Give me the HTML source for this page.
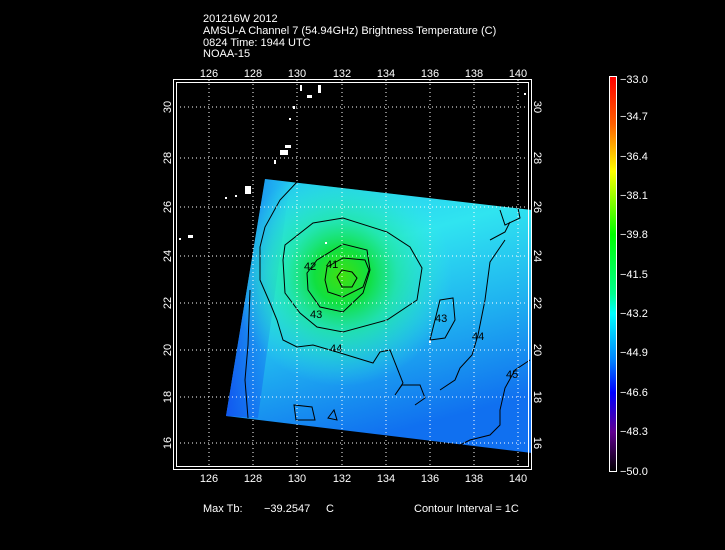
<!DOCTYPE html>
<html><head><style>
html,body{margin:0;padding:0;background:#000;width:725px;height:550px;overflow:hidden}
svg{display:block}
text{font-family:"Liberation Sans",sans-serif;fill:#fff;font-size:11px}
</style></head><body>
<svg width="725" height="550" viewBox="0 0 725 550" xmlns="http://www.w3.org/2000/svg">
<defs>
<linearGradient id="base" x1="0" y1="0" x2="0.3" y2="1">
<stop offset="0" stop-color="#20c0f0"/>
<stop offset="0.35" stop-color="#30e4f0"/>
<stop offset="0.65" stop-color="#20b4f0"/>
<stop offset="1" stop-color="#1070f0"/>
</linearGradient>
<radialGradient id="eye" cx="342" cy="276" r="110" gradientUnits="userSpaceOnUse">
<stop offset="0" stop-color="#40e010"/>
<stop offset="0.25" stop-color="#10e040"/>
<stop offset="0.5" stop-color="#20e8a0" stop-opacity="0.8"/>
<stop offset="1" stop-color="#30f0e0" stop-opacity="0"/>
</radialGradient>
<linearGradient id="cb" x1="0" y1="0" x2="0" y2="1">
<stop offset="0" stop-color="#ff0000"/>
<stop offset="0.12" stop-color="#ff6000"/>
<stop offset="0.24" stop-color="#ffff00"/>
<stop offset="0.4" stop-color="#00ff00"/>
<stop offset="0.55" stop-color="#00ff90"/>
<stop offset="0.6" stop-color="#00ffff"/>
<stop offset="0.72" stop-color="#0080ff"/>
<stop offset="0.8" stop-color="#0000ff"/>
<stop offset="0.9" stop-color="#600090"/>
<stop offset="1" stop-color="#000000"/>
</linearGradient>
<linearGradient id="lft" x1="0" y1="0" x2="1" y2="0">
<stop offset="0" stop-color="#1050f0" stop-opacity="0.9"/>
<stop offset="1" stop-color="#1060f0" stop-opacity="0"/>
</linearGradient>
</defs>
<text x="203" y="22">201216W 2012</text>
<text x="203" y="34">AMSU-A Channel 7 (54.94GHz) Brightness Temperature (C)</text>
<text x="203" y="46">0824 Time: 1944 UTC</text>
<text x="203" y="57">NOAA-15</text>

<polygon points="265,179 532,210 532,453 226,416" fill="url(#base)"/>
<polygon points="265,179 290,182 258,418 226,416" fill="url(#lft)"/>
<polygon points="265,179 532,210 532,453 226,416" fill="url(#eye)"/>

<g fill="none" stroke="#000" stroke-width="1">
<path d="M337,277 L342,270 L352,272 L357,278 L352,287 L342,287 Z"/>
<path d="M327,267 L343,258 L365,260 L369,270 L363,287 L343,297 L328,292 L325,280 Z"/>
<path d="M307,273 L317,260 L343,244 L367,250 L370,270 L363,293 L343,312 L320,307 L308,290 Z"/>
<path d="M283,260 L285,245 L313,223 L343,218 L387,232 L410,247 L422,268 L417,300 L387,320 L343,332 L317,327 L300,313 L285,293 Z"/>
<path d="M297,182 L280,200 L265,227 L260,247 L260,280 L270,303 L277,320 L283,340 L297,347 L313,345 L337,352 L373,363 L380,352 L390,350 L403,383 L395,395 L402,385 L420,385 L425,398 L415,405"/>
<path d="M440,300 L453,298 L455,320 L445,338 L430,340 Z"/>
<path d="M294,405 L296,420 L315,420 L312,407 Z"/>
<path d="M328,418 L334,410 L337,420 Z"/>
<path d="M500,210 L505,225 L520,218 L518,208 M490,240 L505,232 L510,222 M505,240 L490,262 L485,300 L478,335 L472,355 L460,368 L455,380 L440,390"/>
<path d="M530,360 L515,370 L505,388 L500,410 L500,425 L490,435 L470,440 L460,445"/>
<path d="M250,290 L248,345 L245,380 L248,418"/>
</g>
<g>
<text x="304" y="270" font-size="10" style="fill:#000">42</text>
<text x="326" y="268" font-size="10" style="fill:#000">41</text>
<text x="310" y="318" font-size="10" style="fill:#000">43</text>
<text x="330" y="352" font-size="10" style="fill:#000">44</text>
<text x="435" y="322" font-size="10" style="fill:#000">43</text>
<text x="472" y="340" font-size="10" style="fill:#000">44</text>
<text x="506" y="378" font-size="10" style="fill:#000">45</text>
</g>
<g fill="#fff">
<rect x="300" y="85" width="2" height="6"/><rect x="307" y="95" width="5" height="3"/><rect x="318" y="85" width="3" height="8"/>
<rect x="293" y="106" width="2" height="3"/><rect x="289" y="118" width="2" height="2"/><rect x="280" y="150" width="8" height="5"/>
<rect x="285" y="145" width="6" height="3"/><rect x="274" y="160" width="2" height="4"/><rect x="245" y="186" width="6" height="8"/>
<rect x="235" y="195" width="2" height="2"/><rect x="225" y="197" width="2" height="2"/><rect x="188" y="235" width="5" height="3"/>
<rect x="179" y="238" width="2" height="2"/><rect x="325" y="242" width="2" height="2"/><rect x="524" y="93" width="2" height="2"/>
<rect x="429" y="341" width="2" height="2"/>
</g>
<g stroke="#fff" stroke-width="1" stroke-dasharray="1,3" fill="none">
<path d="M209,80V468M253,80V468M297,80V468M342,80V468M386,80V468M430,80V468M474,80V468M518,80V468"/>
<path d="M176,107H529M176,158H529M176,207H529M176,256H529M176,303H529M176,350H529M176,397H529M176,443H529"/>
</g>
<rect x="173.5" y="79.5" width="358" height="390" fill="none" stroke="#fff"/>
<rect x="176.5" y="82.5" width="352" height="384" fill="none" stroke="#fff"/>
<g text-anchor="middle">
<text x="209" y="77">126</text><text x="253" y="77">128</text><text x="297" y="77">130</text><text x="342" y="77">132</text><text x="386" y="77">134</text><text x="430" y="77">136</text><text x="474" y="77">138</text><text x="518" y="77">140</text>
<text x="209" y="482">126</text><text x="253" y="482">128</text><text x="297" y="482">130</text><text x="342" y="482">132</text><text x="386" y="482">134</text><text x="430" y="482">136</text><text x="474" y="482">138</text><text x="518" y="482">140</text>
</g>
<g text-anchor="middle">
<text transform="translate(171,107) rotate(-90)">30</text><text transform="translate(171,158) rotate(-90)">28</text><text transform="translate(171,207) rotate(-90)">26</text><text transform="translate(171,256) rotate(-90)">24</text><text transform="translate(171,303) rotate(-90)">22</text><text transform="translate(171,350) rotate(-90)">20</text><text transform="translate(171,397) rotate(-90)">18</text><text transform="translate(171,443) rotate(-90)">16</text>
<text transform="translate(534,107) rotate(90)">30</text><text transform="translate(534,158) rotate(90)">28</text><text transform="translate(534,207) rotate(90)">26</text><text transform="translate(534,256) rotate(90)">24</text><text transform="translate(534,303) rotate(90)">22</text><text transform="translate(534,350) rotate(90)">20</text><text transform="translate(534,397) rotate(90)">18</text><text transform="translate(534,443) rotate(90)">16</text>
</g>
<rect x="609.5" y="76.5" width="7" height="395" fill="url(#cb)" stroke="#fff"/>
<g>
<text x="620" y="83">−33.0</text><text x="620" y="120">−34.7</text><text x="620" y="160">−36.4</text><text x="620" y="199">−38.1</text><text x="620" y="238">−39.8</text><text x="620" y="278">−41.5</text><text x="620" y="317">−43.2</text><text x="620" y="356">−44.9</text><text x="620" y="396">−46.6</text><text x="620" y="435">−48.3</text><text x="620" y="475">−50.0</text>
</g>
<text x="203" y="512">Max Tb:</text>
<text x="264" y="512">−39.2547</text>
<text x="326" y="512">C</text>
<text x="414" y="512">Contour Interval = 1C</text>
</svg>
</body></html>
